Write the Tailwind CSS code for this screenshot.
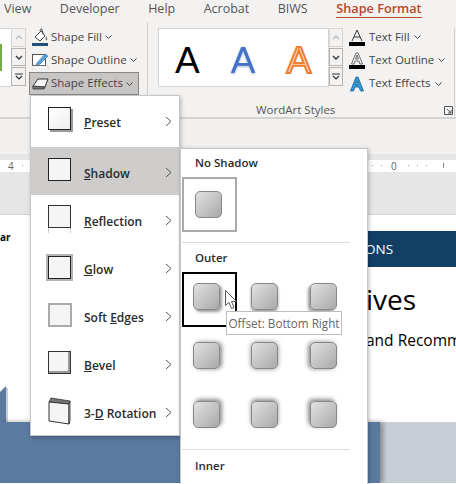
<!DOCTYPE html>
<html lang="en">
<head>
    <meta charset="UTF-8">
    <title>Shape Effects menu</title>
    <script src="https://cdn.jsdelivr.net/npm/@tailwindcss/browser@4"></script>
</head>
<body class="relative w-[456px] h-[484px] overflow-hidden bg-white font-['Open_Sans','Noto_Sans',sans-serif] text-[11.5px] text-[#444]">
    <!-- Tabs -->
    <div class="h-[18px] bg-[#f3f2f1] flex items-start pl-[4px] gap-[28.500px] text-[12.5px] leading-[17px] text-[#555] whitespace-nowrap">
        <span>View</span>
        <span>Developer</span>
        <span>Help</span>
        <span>Acrobat</span>
        <span>BIWS</span>
        <div class="h-[20px] border-b-[3px] border-[#b7472a] font-semibold text-[#b7472a] text-[12.7px]">Shape Format</div>
    </div>

    <!-- Ribbon -->
    <div class="h-[101px] bg-[#f3f2f1] border-b-2 border-[#d4d3d2] flex pt-[10px] relative">
        <!-- shape styles gallery stub -->
        <div class="w-[11px] h-[59px] bg-white border-y border-[#d6d5d4] flex items-center">
            <div class="w-[2px] h-[27px] bg-[#70ad47]"></div>
        </div>
        <div class="w-[15px] h-[59px] flex flex-col gap-[1px] text-[#444]">
            <div class="h-[19px] border border-[#d6d5d4] bg-[#f3f2f1] flex items-center justify-center">
                <svg width="8" height="5" viewBox="0 0 8 5" fill="none" stroke="#bbb" stroke-width="1.3"><path d="M1 4 4 1l3 3"/></svg>
            </div>
            <div class="h-[18px] border border-[#b5b4b3] flex items-center justify-center">
                <svg width="8" height="5" viewBox="0 0 8 5" fill="none" stroke="#333" stroke-width="1.3"><path d="M1 1l3 3 3-3"/></svg>
            </div>
            <div class="h-[19px] border border-[#b5b4b3] flex items-center justify-center">
                <svg width="8" height="7" viewBox="0 0 8 7" fill="none" stroke="#333" stroke-width="1.2"><path d="M0 1h8M1 3l3 3 3-3"/></svg>
            </div>
        </div>

        <!-- shape fill / outline / effects -->
        <div class="w-[110px] ml-[3px] flex flex-col gap-[1px] -mt-[2px] whitespace-nowrap">
            <div class="h-[22px] flex items-center pl-[3px] gap-[2px]">
                <svg width="17" height="18" viewBox="0 0 17 18" fill="none">
                    <path d="M3 9 9 3l4 5-5 5z" fill="#fff" stroke="#444"/>
                    <path d="M8 3c0-2 2-3 2-1l1 4" stroke="#444"/>
                    <path d="M14 8c1 2 2 3 1 4s-2 0-1-4z" fill="#777"/>
                    <rect x="0" y="15" width="16" height="3" fill="#1f4e79"/>
                </svg>
                <span>Shape Fill</span>
                <svg class="ml-[1px]" width="7" height="4" viewBox="0 0 7 4" fill="none" stroke="#444"><path d="M.5.5l3 3 3-3"/></svg>
            </div>
            <div class="h-[22px] flex items-center pl-[3px] gap-[2px]">
                <svg width="17" height="18" viewBox="0 0 17 18" fill="none">
                    <rect x=".5" y="3.5" width="13" height="11" stroke="#555" fill="#fff"/>
                    <path d="M5 12 13 3l3 2-8 8-4 1z" fill="#5aa6dc" stroke="#2e75b6" stroke-width=".7"/>
                    <rect x="0" y="15" width="16" height="3" fill="#fff" stroke="#bbb" stroke-width=".6"/>
                </svg>
                <span>Shape Outline</span>
                <svg class="ml-[1px]" width="7" height="4" viewBox="0 0 7 4" fill="none" stroke="#444"><path d="M.5.5l3 3 3-3"/></svg>
            </div>
            <div class="h-[23px] flex items-center pl-[2px] gap-[2px] bg-[#c8c6c4] border border-[#8a8886]">
                <svg width="17" height="14" viewBox="0 0 17 14" fill="none">
                    <path d="M1 9 6 2h10l-3 8H1z" fill="#f5f5f5" stroke="#333"/>
                    <path d="M1 9v3h11l1-2z" fill="#777" stroke="#333" stroke-width=".8"/>
                </svg>
                <span class="-mt-[1px]">Shape Effects</span>
                <svg class="ml-[1px]" width="7" height="4" viewBox="0 0 7 4" fill="none" stroke="#444"><path d="M.5.5l3 3 3-3"/></svg>
            </div>
        </div>
        <div class="w-px h-[92px] -mt-[6px] ml-[8px] bg-[#d2d1d0]"></div>

        <!-- WordArt gallery -->
        <div class="w-[171px] h-[59px] ml-[10px] bg-white border border-[#d6d5d4] flex items-center pl-[16px] pt-[6px] gap-[31px] font-['Liberation_Sans',sans-serif] text-[37px] leading-none">
            <span class="text-black">A</span>
            <span class="text-[#4472c4] drop-shadow-[0_1px_1px_rgba(68,114,196,0.5)]">A</span>
            <span class="text-[#f9d9bf] [-webkit-text-stroke:2px_#ed7d31]">A</span>
        </div>
        <div class="w-[14px] h-[59px] flex flex-col gap-[1px]">
            <div class="h-[19px] border border-[#d6d5d4] flex items-center justify-center">
                <svg width="8" height="5" viewBox="0 0 8 5" fill="none" stroke="#bbb" stroke-width="1.3"><path d="M1 4 4 1l3 3"/></svg>
            </div>
            <div class="h-[18px] border border-[#b5b4b3] flex items-center justify-center">
                <svg width="8" height="5" viewBox="0 0 8 5" fill="none" stroke="#333" stroke-width="1.3"><path d="M1 1l3 3 3-3"/></svg>
            </div>
            <div class="h-[19px] border border-[#b5b4b3] flex items-center justify-center">
                <svg width="8" height="7" viewBox="0 0 8 7" fill="none" stroke="#333" stroke-width="1.2"><path d="M0 1h8M1 3l3 3 3-3"/></svg>
            </div>
        </div>

        <!-- text fill / outline / effects -->
        <div class="ml-[6px] flex flex-col gap-[1px] -mt-[2px] whitespace-nowrap">
            <div class="h-[22px] flex items-center gap-[4px]">
                <svg width="16" height="17" viewBox="0 0 16 17" fill="none">
                    <path d="M3 12 8 1l5 11M5 8h6" stroke="#333"/>
                    <rect y="13" width="16" height="4" fill="#000"/>
                </svg>
                <span>Text Fill</span>
                <svg width="7" height="4" viewBox="0 0 7 4" fill="none" stroke="#444"><path d="M.5.5l3 3 3-3"/></svg>
            </div>
            <div class="h-[22px] flex items-center gap-[4px]">
                <svg width="16" height="17" viewBox="0 0 16 17" fill="none">
                    <path d="M2.500 12 7 1h2l4.500 11h-2.500L10 9H6l-1 3zM6.500 7h3L8 3z" fill="#fff" stroke="#444" stroke-width=".8"/>
                    <rect y="13" width="16" height="4" fill="#000"/>
                </svg>
                <span>Text Outline</span>
                <svg width="7" height="4" viewBox="0 0 7 4" fill="none" stroke="#444"><path d="M.5.5l3 3 3-3"/></svg>
            </div>
            <div class="h-[23px] flex items-center gap-[4px]">
                <svg width="16" height="16" viewBox="0 0 16 16" fill="none">
                    <path d="M1.500 15 7 1h2l5.500 14h-3L10 11H6l-1.500 4zM6.800 8.500h2.400L8 5z" fill="#2e9bd6" stroke="#1f5f8f" stroke-width=".8"/>
                </svg>
                <span class="-mt-[1px]">Text Effects</span>
                <svg width="7" height="4" viewBox="0 0 7 4" fill="none" stroke="#444"><path d="M.5.5l3 3 3-3"/></svg>
            </div>
        </div>

        <!-- group label -->
        <div class="absolute left-[256px] top-[84px] text-[11.5px] leading-[16px] text-[#555] whitespace-nowrap">WordArt Styles</div>
        <svg class="absolute left-[444px] top-[88px]" width="9" height="9" viewBox="0 0 9 9" fill="none" stroke="#555">
            <path d="M.5 8.500V.5h8v8zM3 3l4 4M7 4v3H4"/>
        </svg>
        <div class="absolute left-[454px] top-[10px] w-px h-[88px] bg-[#d2d1d0]"></div>
    </div>

    <!-- Gap above ruler -->
    <div class="h-[35px] bg-[#f1f0ef]"></div>
    <div class="h-[6px] bg-[#e6e6e6]"></div>

    <!-- Ruler -->
    <div class="h-[12px] bg-white relative text-[10px] leading-[12px] text-[#666]">
        <span class="absolute left-[8px] top-0">4</span>
        <span class="absolute left-[391px] top-0">0</span>
        <span class="absolute left-[22px] top-[5px] w-px h-px bg-[#999]"></span>
        <span class="absolute left-[372px] top-[5px] w-px h-px bg-[#999]"></span>
        <span class="absolute left-[381px] top-[5px] w-px h-px bg-[#999]"></span>
        <span class="absolute left-[408px] top-[5px] w-px h-px bg-[#999]"></span>
        <span class="absolute left-[417px] top-[5px] w-px h-px bg-[#999]"></span>
        <span class="absolute left-[426px] top-[5px] w-px h-px bg-[#999]"></span>
        <span class="absolute left-[443px] top-[3px] w-px h-[5px] bg-[#888]"></span>
    </div>
    <div class="h-[43px] bg-[#e6e6e6] border-b border-[#cfcfcf]"></div>

    <!-- Slide -->
    <div class="h-[268px] bg-white relative isolate overflow-hidden whitespace-nowrap text-black">
        <div class="mt-[16px] ml-[368px] h-[36px] bg-[#123f66] text-white text-[13.5px] leading-[36px]">
            <span class="-ml-[3px] inline-block">ONS</span>
        </div>
        <div class="mt-[14px] ml-[366px] text-[28px] leading-[36px]">ives</div>
        <div class="mt-[12px] ml-[366px] text-[15.5px] leading-[22px]">and Recommendations</div>
        <div class="absolute left-0 top-[15px] text-[10px] font-bold leading-[14px]">ar</div>

        <!-- bottom picture -->
        <div class="absolute left-0 right-0 bottom-0 h-[61px] flex">
            <div class="w-[380px] bg-[#5b7aa0] shadow-[3px_0_5px_rgba(0,0,0,0.35)] z-10"></div>
            <div class="flex-1 bg-[#c9ced6]"></div>
        </div>
        <div class="absolute left-0 bottom-[61px] w-[6px] h-[36px] bg-[#5b7aa0] [clip-path:polygon(0_6px,100%_0,100%_100%,0_100%)]"></div>
        <div class="absolute left-[6px] bottom-[61px] w-[2px] h-[34px] bg-[#c8ccd2]"></div>
    </div>

    <!-- Shape Effects menu -->
    <div class="absolute left-[30px] top-[95px] w-[150px] h-[341px] bg-white border border-[#c8c8c8] shadow-[1px_2px_4px_rgba(0,0,0,0.25)] text-[12px] font-semibold text-[#2b2b2b]">
        <div class="h-[48px] mb-[3px] flex items-center pl-[17px]">
            <div class="-mt-[3px] w-[23px] h-[23px] border border-[#222] bg-gradient-to-br from-white to-[#eee] shadow-[2px_2px_0_#9a9a9a]"></div>
            <span class="ml-[13px] mt-[6px] w-[81px]"><u>P</u>reset</span>
            <svg class="mt-[2px]" width="7" height="11" viewBox="0 0 7 11" fill="none" stroke="#555"><path d="M1 1l5 4.500-5 4.500"/></svg>
        </div>
        <div class="h-[48px] flex items-center pl-[17px] bg-[#cfcdcb]">
            <div class="-mt-[3px] w-[23px] h-[23px] border border-[#222] bg-[#f5f5f5]"></div>
            <span class="ml-[13px] mt-[6px] w-[81px]"><u>S</u>hadow</span>
            <svg class="mt-[2px]" width="7" height="11" viewBox="0 0 7 11" fill="none" stroke="#555"><path d="M1 1l5 4.500-5 4.500"/></svg>
        </div>
        <div class="h-[48px] flex items-center pl-[17px]">
            <div class="-mt-[5px] relative w-[23px] h-[23px] border border-[#333] bg-[#f5f5f5]">
                <div class="absolute -left-px top-[22px] w-[23px] h-[5px] border-x border-[#ccc]"></div>
            </div>
            <span class="ml-[13px] mt-[6px] w-[81px]"><u>R</u>eflection</span>
            <svg class="mt-[2px]" width="7" height="11" viewBox="0 0 7 11" fill="none" stroke="#555"><path d="M1 1l5 4.500-5 4.500"/></svg>
        </div>
        <div class="h-[48px] flex items-center pl-[17px]">
            <div class="w-[23px] h-[23px] border border-[#222] bg-[#f5f5f5] shadow-[0_0_0_2px_#b4b4b4]"></div>
            <span class="ml-[13px] mt-[6px] w-[81px]"><u>G</u>low</span>
            <svg class="mt-[2px]" width="7" height="11" viewBox="0 0 7 11" fill="none" stroke="#555"><path d="M1 1l5 4.500-5 4.500"/></svg>
        </div>
        <div class="h-[48px] flex items-center pl-[17px]">
            <div class="w-[24px] h-[24px] border-2 border-[#aaa] bg-[#f5f5f5] blur-[0.3px]"></div>
            <span class="ml-[12px] mt-[6px] w-[81px]">Soft <u>E</u>dges</span>
            <svg class="mt-[2px]" width="7" height="11" viewBox="0 0 7 11" fill="none" stroke="#555"><path d="M1 1l5 4.500-5 4.500"/></svg>
        </div>
        <div class="h-[48px] flex items-center pl-[17px]">
            <div class="-mt-[2px] w-[23px] h-[23px] border border-[#333] bg-[#f5f5f5] shadow-[inset_-2px_-2px_0_#999]"></div>
            <span class="ml-[13px] mt-[6px] w-[81px]"><u>B</u>evel</span>
            <svg class="mt-[2px]" width="7" height="11" viewBox="0 0 7 11" fill="none" stroke="#555"><path d="M1 1l5 4.500-5 4.500"/></svg>
        </div>
        <div class="h-[48px] flex items-center pl-[17px]">
            <svg width="23" height="28" viewBox="0 0 23 28" fill="none">
                <path d="M1 5 3 1l19 3-1 3z" fill="#777" stroke="#333" stroke-width=".8"/>
                <path d="M1 5 21 7v20L1 24z" fill="#f5f5f5" stroke="#333"/>
                <path d="M21 7l1-3v20l-1 3z" fill="#ccc" stroke="#333" stroke-width=".8"/>
            </svg>
            <span class="ml-[13px] mt-[6px] w-[81px]">3-<u>D</u> Rotation</span>
            <svg class="mt-[2px]" width="7" height="11" viewBox="0 0 7 11" fill="none" stroke="#555"><path d="M1 1l5 4.500-5 4.500"/></svg>
        </div>
    </div>

    <!-- Shadow gallery -->
    <div class="absolute left-[180px] top-[148px] w-[188px] h-[340px] bg-white border border-[#c8c8c8] shadow-[1px_1px_4px_rgba(0,0,0,0.25)] text-[11.5px] font-semibold text-[#2b2b2b] pl-[1px]">
        <div class="h-[28px] pl-[13px] pt-[5px] leading-[17px]">No Shadow</div>
        <div class="w-[55px] h-[55px] border-2 border-[#aaa] flex items-center justify-center pr-[2px]">
            <div class="w-[27px] h-[27px] rounded-[5px] border border-[#888] bg-gradient-to-br from-[#e2e2e2] to-[#a9a9a9]"></div>
        </div>
        <div class="h-px w-[168px] mt-[10px] bg-[#dcdcdc]"></div>
        <div class="h-[29px] pl-[13px] pt-[6px] leading-[17px]">Outer</div>
        <div class="grid grid-cols-[55px_59px_59px] grid-rows-[59px_59px_59px] w-[173px]">
            <div class="w-[55px] h-[55px] border-2 border-black flex items-center justify-center pr-[6px] pb-[6px]">
                <div class="w-[27px] h-[27px] rounded-[5px] border border-[#888] bg-gradient-to-br from-[#e2e2e2] to-[#a9a9a9] shadow-[2px_2px_3px_rgba(0,0,0,0.4)]"></div>
            </div>
            <div class="w-[55px] h-[55px] flex items-center justify-center pb-[6px]">
                <div class="w-[27px] h-[27px] rounded-[5px] border border-[#888] bg-gradient-to-br from-[#e2e2e2] to-[#a9a9a9] shadow-[0_2px_3px_rgba(0,0,0,0.4)]"></div>
            </div>
            <div class="w-[55px] h-[55px] flex items-center justify-center pb-[6px]">
                <div class="w-[27px] h-[27px] rounded-[5px] border border-[#888] bg-gradient-to-br from-[#e2e2e2] to-[#a9a9a9] shadow-[-2px_2px_3px_rgba(0,0,0,0.4)]"></div>
            </div>
            <div class="w-[55px] h-[55px] flex items-center justify-center pr-[6px] pb-[6px]">
                <div class="w-[27px] h-[27px] rounded-[5px] border border-[#888] bg-gradient-to-br from-[#e2e2e2] to-[#a9a9a9] shadow-[2px_0_4px_rgba(0,0,0,0.45)]"></div>
            </div>
            <div class="w-[55px] h-[55px] flex items-center justify-center pb-[6px]">
                <div class="w-[27px] h-[27px] rounded-[5px] border border-[#888] bg-gradient-to-br from-[#e2e2e2] to-[#a9a9a9] shadow-[0_0_5px_rgba(0,0,0,0.45)]"></div>
            </div>
            <div class="w-[55px] h-[55px] flex items-center justify-center pb-[6px]">
                <div class="w-[27px] h-[27px] rounded-[5px] border border-[#888] bg-gradient-to-br from-[#e2e2e2] to-[#a9a9a9] shadow-[-2px_0_4px_rgba(0,0,0,0.45)]"></div>
            </div>
            <div class="w-[55px] h-[55px] flex items-center justify-center pr-[6px] pb-[6px]">
                <div class="w-[27px] h-[27px] rounded-[5px] border border-[#888] bg-gradient-to-br from-[#e2e2e2] to-[#a9a9a9] shadow-[2px_-2px_4px_rgba(0,0,0,0.45)]"></div>
            </div>
            <div class="w-[55px] h-[55px] flex items-center justify-center pb-[6px]">
                <div class="w-[27px] h-[27px] rounded-[5px] border border-[#888] bg-gradient-to-br from-[#e2e2e2] to-[#a9a9a9] shadow-[0_-2px_4px_rgba(0,0,0,0.45)]"></div>
            </div>
            <div class="w-[55px] h-[55px] flex items-center justify-center pb-[6px]">
                <div class="w-[27px] h-[27px] rounded-[5px] border border-[#888] bg-gradient-to-br from-[#e2e2e2] to-[#a9a9a9] shadow-[-2px_-2px_4px_rgba(0,0,0,0.45)]"></div>
            </div>
        </div>
        <div class="h-px w-[168px] bg-[#dcdcdc]"></div>
        <div class="pl-[13px] pt-[7px] leading-[17px]">Inner</div>
    </div>

    <!-- Tooltip and pointer -->
    <div class="absolute left-[226px] top-[311px] w-[116px] h-[24px] bg-white border border-[#bdbdbd] text-[11.7px] leading-[22px] text-[#666] text-center whitespace-nowrap">Offset: Bottom Right</div>
    <svg class="absolute left-[225px] top-[290px]" width="13" height="20" viewBox="0 0 13 20">
        <path d="M.5.5v15l3.500-3 2.500 6 2.500-1-2.500-6h5z" fill="#fff" stroke="#555"/>
    </svg>
</body>
</html>
